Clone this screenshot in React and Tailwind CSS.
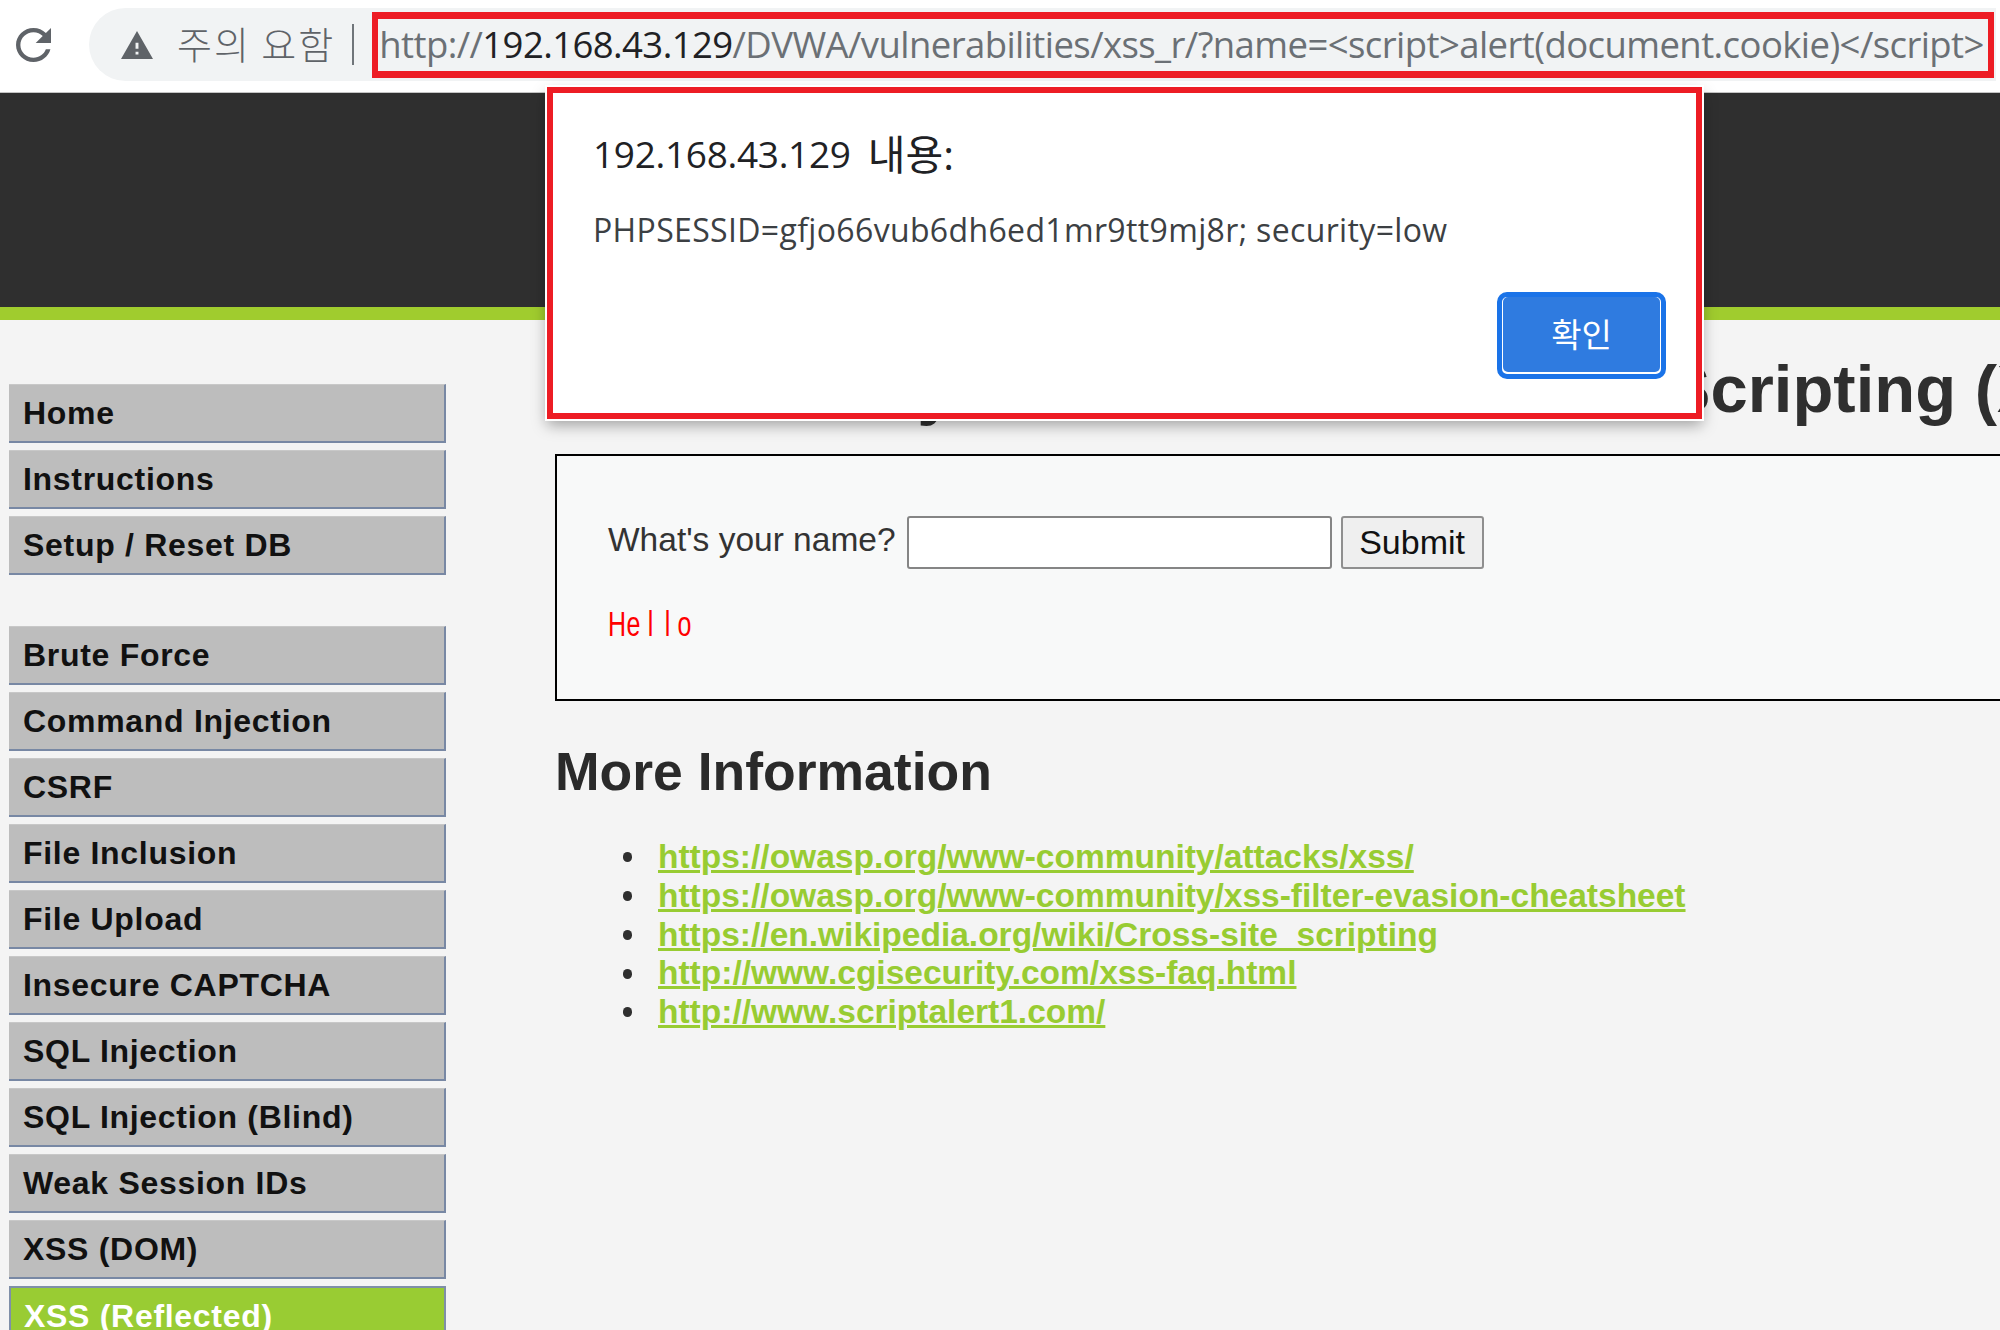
const top = ["Home", "Instructions", "Setup / Reset DB"];
const vulns = ["Brute Force", "Command Injection", "CSRF", "File Inclusion", "File Upload", "Insecure CAPTCHA", "SQL Injection", "SQL Injection (Blind)", "Weak Session IDs", "XSS (DOM)"];
const links = [
  "https://owasp.org/www-community/attacks/xss/",
  "https://owasp.org/www-community/xss-filter-evasion-cheatsheet",
  "https://en.wikipedia.org/wiki/Cross-site_scripting",
  "http://www.cgisecurity.com/xss-faq.html",
  "http://www.scriptalert1.com/",
];

function NavItem({ label, active }) {
  return (
    <div className={active
      ? "h-[59px] flex items-center pl-[13px] border-2 border-[#7f8fa8] bg-[#99cc33] text-white text-[32px] font-bold tracking-[0.7px] whitespace-nowrap"
      : "h-[59px] flex items-center pl-[14px] border-r-2 border-b-2 border-[#7888a4] border-t border-t-[#c8c8c8] bg-[#bdbdbd] text-[#111111] text-[32px] font-bold tracking-[0.7px] whitespace-nowrap"}>
      {label}
    </div>
  );
}

export default function App() {
  return (
    <div className="relative w-[2000px] h-[1330px] overflow-hidden flex flex-col bg-[#f4f4f4] font-['Liberation_Sans',sans-serif]">
      <div className="h-[93px] shrink-0 bg-white flex items-start pt-[8px] pl-[16px] border-b border-[#c4c4c4]">
        <svg className="w-[35px] h-[34px] mt-[20px] shrink-0" viewBox="4 4 16 16" fill="#5f6368" preserveAspectRatio="none">
          <path d="M17.65 6.35C16.2 4.9 14.21 4 12 4c-4.42 0-7.99 3.58-7.99 8s3.57 8 7.99 8c3.73 0 6.84-2.55 7.73-6h-2.08c-.82 2.33-3.04 4-5.65 4-3.31 0-6-2.69-6-6s2.69-6 6-6c1.66 0 3.14.69 4.22 1.78L13 11h7V4l-2.35 2.35z" />
        </svg>
        <div className="ml-[38px] w-[1907px] h-[73px] rounded-l-full bg-[#f1f3f4] flex items-center pl-[32px]">
          <svg className="w-[32px] h-[28px] shrink-0" viewBox="1 2 22 19" fill="#5f6368" preserveAspectRatio="none">
            <path d="M1 21h22L12 2 1 21zm12-3h-2v-2h2v2zm0-4h-2v-4h2v4z" />
          </svg>
          <span className="ml-[24px] -mt-[3px] text-[38px] leading-none text-[#5f6368] font-['Noto_Sans_CJK_KR',sans-serif] font-light whitespace-nowrap tracking-[2px]">주의 요함</span>
          <div className="ml-[17px] w-[2px] h-[41px] bg-[#70757a] shrink-0" />
          <div className="ml-[18px] w-[1622px] h-[66px] shrink-0 border-x-[6px] border-y-[7px] border-[#ed1c24] flex items-center pl-[1px] overflow-hidden text-[36.5px] leading-none text-[#6b7075] whitespace-nowrap font-['Open_Sans',sans-serif] tracking-[-0.58px]">
            http://<span className="text-[#202124]">192.168.43.129</span>/DVWA/vulnerabilities/xss_r/?name=&lt;script&gt;alert(document.cookie)&lt;/script&gt;
          </div>
        </div>
      </div>

      <div className="h-[214px] shrink-0 bg-[#2f2f2f]" />
      <div className="h-[13px] shrink-0 bg-[#a0cc2e]" />

      <div className="flex-1 flex min-h-0">
        <nav className="w-[555px] shrink-0 pl-[9px] pr-[109px] pt-[64px] flex flex-col">
          <div className="flex flex-col gap-[7px]">
            {top.map((t) => <NavItem key={t} label={t} />)}
          </div>
          <div className="flex flex-col gap-[7px] mt-[51px]">
            {vulns.map((t) => <NavItem key={t} label={t} />)}
            <NavItem label="XSS (Reflected)" active />
          </div>
        </nav>

        <main className="min-w-0 w-[1445px] pt-[36px] text-[#2f2f2f]">
          <h1 className="text-[67px] leading-[66px] font-bold whitespace-nowrap">Vulnerability: Reflected Cross Site Scripting (XSS)</h1>
          <div className="mt-[32px] w-[1500px] h-[247px] border-2 border-black bg-[#f8f9f9] pl-[51px] pt-[60px]">
            <div className="flex items-center h-[53px]">
              <span className="text-[33.5px] leading-none text-[#333333] -mt-[6px] whitespace-nowrap">What's your name?</span>
              <div className="ml-[11px] w-[425px] h-[53px] bg-white border-2 border-[#858585] rounded-[3px]" />
              <div className="ml-[9px] w-[143px] h-[53px] bg-[#efefef] border-2 border-[#8f8f8f] rounded-[3px] flex items-center justify-center text-[34px] text-[#111111]">Submit</div>
            </div>
            <div className="mt-[38px] flex h-[32px] items-center text-[25px] leading-[32px] text-[#ff0000] scale-y-[1.4] origin-center">
              {["H", "e", "l", "l", "o"].map((c, i) => (
                <span key={i} className="w-[17px] text-center">{c}</span>
              ))}
            </div>
          </div>
          <h2 className="mt-[44px] text-[53.5px] leading-[53px] font-bold text-[#2a2a2a]">More Information</h2>
          <ul className="mt-[40px] ml-[68px] text-[33.5px] leading-[38.75px] font-bold">
            {links.map((l) => (
              <li key={l} className="flex items-center h-[38.75px]">
                <span className="w-[9px] h-[10px] rounded-full bg-[#2f2f2f] shrink-0" />
                <a className="ml-[26px] text-[#98cc32] underline whitespace-nowrap">{l}</a>
              </li>
            ))}
          </ul>
        </main>
      </div>

      <div className="absolute left-[547px] top-[87px] w-[1155px] h-[332px] bg-white border-[6px] border-[#ed1c24] shadow-[0_0_0_2px_#ffffff,0_6px_14px_rgba(0,0,0,0.35)] pl-[40px] pt-[39px] font-['Open_Sans','Noto_Sans_CJK_KR',sans-serif]">
        <div className="flex items-center text-[37px] leading-[44px] text-[#202124] tracking-[-0.3px] whitespace-nowrap">
          <span>192.168.43.129</span>
          <span className="ml-[17px] text-[41px] tracking-[0px]">내용:</span>
        </div>
        <div className="mt-[34px] text-[32px] leading-[40px] text-[#3c4043] tracking-[0.35px] whitespace-nowrap">PHPSESSID=gfjo66vub6dh6ed1mr9tt9mj8r; security=low</div>
        <div className="absolute right-[30px] bottom-[34px] w-[169px] h-[87px] rounded-[10px] border-[5px] border-[#1a73e8] bg-white p-[1px]">
          <div className="w-full h-full rounded-[5px] bg-[#2f7be0] flex items-center justify-center text-[33px] text-white -mt-[1px]">확인</div>
        </div>
      </div>
    </div>
  );
}
